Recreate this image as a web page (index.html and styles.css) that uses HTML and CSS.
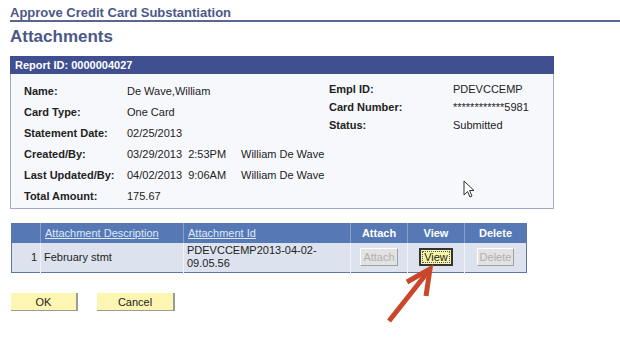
FILE: index.html
```html
<!DOCTYPE html>
<html lang="en">
<head>
    <meta charset="UTF-8">
    <title>Attachments</title>
    <link rel="stylesheet" href="styles.css">
</head>
<body>

    <div class="page">
        <div class="crumb">Approve Credit Card Substantiation</div>
        <h1>Attachments</h1>

        <div class="report">
            <div class="report-head">Report ID: 0000004027</div>
            <div class="report-body">
                <div class="info-left">
                    <div class="row"><span class="lbl">Name:</span><span class="val">De Wave,William</span></div>
                    <div class="row"><span class="lbl">Card Type:</span><span class="val">One Card</span></div>
                    <div class="row"><span class="lbl">Statement Date:</span><span class="val">02/25/2013</span></div>
                    <div class="row"><span class="lbl">Created/By:</span><span class="val">03/29/2013&nbsp; 2:53PM</span><span class="who">William De Wave</span></div>
                    <div class="row"><span class="lbl">Last Updated/By:</span><span class="val">04/02/2013&nbsp; 9:06AM</span><span class="who">William De Wave</span></div>
                    <div class="row"><span class="lbl">Total Amount:</span><span class="val">175.67</span></div>
                </div>
                <div class="info-right">
                    <div class="row"><span class="lbl">Empl ID:</span><span class="val">PDEVCCEMP</span></div>
                    <div class="row"><span class="lbl">Card Number:</span><span class="val">************5981</span></div>
                    <div class="row"><span class="lbl">Status:</span><span class="val">Submitted</span></div>
                </div>
            </div>
        </div>

        <table class="grid">
            <tr>
                <th class="c-num"></th>
                <th class="c-desc left"><a href="#">Attachment Description</a></th>
                <th class="c-id left"><a href="#">Attachment Id</a></th>
                <th class="c-btn">Attach</th>
                <th class="c-btn">View</th>
                <th class="c-btn c-del">Delete</th>
            </tr>
            <tr>
                <td class="num">1</td>
                <td>February stmt</td>
                <td>PDEVCCEMP2013-04-02-09.05.56</td>
                <td class="mid"><button class="gbtn" disabled>Attach</button></td>
                <td class="mid"><button class="gbtn active">View</button></td>
                <td class="mid"><button class="gbtn" disabled>Delete</button></td>
            </tr>
        </table>

        <div class="actions">
            <button class="pbtn ok">OK</button>
            <button class="pbtn cancel">Cancel</button>
        </div>
    </div>

    <!-- mouse pointer -->
    <svg class="cursor" width="14" height="20" viewBox="0 0 14 20">
        <path d="M1 1 L1 15 L4.5 11.5 L7 17 L9 16 L6.5 10.5 L11 10.5 Z" fill="#fff" stroke="#333" stroke-width="1"/>
    </svg>

    <!-- red arrow -->
    <svg class="arrow" width="60" height="64" viewBox="0 0 60 64">
        <path d="M5 58 L43 10" stroke="#c9472a" stroke-width="5" fill="none"/>
        <path d="M23 19 L46 6 L42 33" stroke="#c9472a" stroke-width="5" fill="none" stroke-linejoin="miter"/>
    </svg>

</body>
</html>
```

FILE: styles.css
```css
/* Reset */
* {
    margin: 0;
    padding: 0;
    box-sizing: border-box;
}

body {
    font-family: 'Liberation Sans', Arial, sans-serif;
    font-size: 11px;
    color: #222;
    background: #fff;
    width: 620px;
    height: 343px;
    overflow: hidden;
    position: relative;
}

.page {
    padding-left: 10px;
}

.crumb {
    font-size: 13px;
    font-weight: bold;
    color: #4b5888;
    line-height: 15px;
    padding-top: 5px;
    border-bottom: 2px solid #5a6592;
}

h1 {
    font-size: 17px;
    font-weight: bold;
    color: #4b5888;
    line-height: 20px;
    margin-top: 5px;
}

/* Report box */
.report {
    margin-top: 9px;
    width: 544px;
    border: 1px solid #a2a8c6;
    border-top: none;
}

.report-head {
    background-color: #3f4f8f;
    color: #fff;
    font-weight: bold;
    height: 18px;
    line-height: 18px;
    padding-left: 5px;
    margin: 0 -1px;
}

.report-body {
    background-color: #f7f8fb;
    display: flex;
    padding: 6px 0 3px 13px;
    height: 134px;
    white-space: nowrap;
}

.info-left {
    width: 305px;
    flex-shrink: 0;
}

.info-left .row {
    display: flex;
    height: 21px;
    align-items: center;
}

.info-left .lbl {
    width: 103px;
    flex-shrink: 0;
    font-weight: bold;
}

.info-left .val {
    width: 114px;
    flex-shrink: 0;
}

.info-right .row {
    display: flex;
    height: 18px;
    align-items: center;
}

.info-right .lbl {
    width: 124px;
    flex-shrink: 0;
    font-weight: bold;
}

/* Attachments grid */
.grid {
    margin-top: 14px;
    margin-left: 1px;
    border-collapse: collapse;
    border: 1px solid #5f74a8;
}

.grid th {
    background-color: #5678b5;
    color: #fff;
    font-weight: bold;
    height: 19px;
    border-left: 1px solid #8aa0cc;
    text-align: center;
}

.grid th.left {
    text-align: left;
    padding-left: 4px;
}

.grid th a {
    color: #dfe8f8;
    font-weight: normal;
    text-decoration: underline;
}

.grid td {
    background-color: #dce2ee;
    height: 30px;
    border-left: 1px solid #f0f3f8;
    padding-left: 3px;
    line-height: 13px;
}

.grid .c-num { width: 29px; border-left: none; }
.grid .c-desc { width: 143px; }
.grid .c-id { width: 167px; }
.grid .c-btn { width: 57px; }
.grid .c-del { width: 62px; }

.grid td.num {
    text-align: right;
    padding-right: 3px;
    border-left: none;
}

.grid td.mid {
    text-align: center;
    padding-left: 0;
}

.gbtn {
    font-family: 'Liberation Sans', Arial, sans-serif;
    font-size: 11px;
    height: 18px;
    padding: 0 2px;
    background-color: #e2e2e2;
    color: #b0b0b0;
    border: 1px solid #fff;
    border-right-color: #a0a0a0;
    border-bottom-color: #a0a0a0;
}

.gbtn.active {
    background-color: #f8f4a8;
    color: #222;
    border: 2px solid #333;
    outline: 1px dotted #555;
    outline-offset: -4px;
    padding: 0 3px;
}

/* Page buttons */
.actions {
    display: flex;
    gap: 19px;
    margin-top: 20px;
    margin-left: 1px;
}

.pbtn {
    font-family: 'Liberation Sans', Arial, sans-serif;
    font-size: 11px;
    height: 18px;
    background-color: #fcf6b2;
    color: #222;
    border: none;
    border-right: 2px solid #9a9a9a;
    border-bottom: 1px solid #9a9a9a;
}

.ok { width: 67px; }
.cancel { width: 78px; }

/* Overlays */
.cursor {
    position: absolute;
    left: 463px;
    top: 180px;
}

.arrow {
    position: absolute;
    left: 384px;
    top: 263px;
}
```
